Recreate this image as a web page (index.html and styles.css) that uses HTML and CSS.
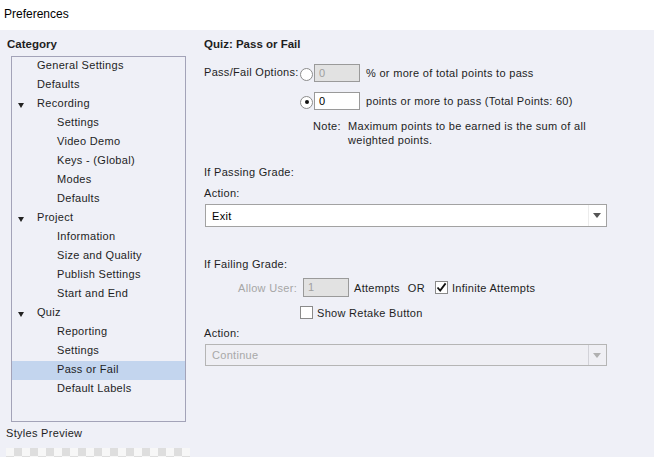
FILE: index.html
```html
<!DOCTYPE html>
<html lang="en">
<head>
    <meta charset="UTF-8">
    <title>Preferences</title>
    <link rel="stylesheet" href="styles.css">
</head>
<body>
    <div class="titlebar">Preferences</div>

    <div class="dialog">
        <div class="sidebar">
            <div class="heading">Category</div>
            <ul class="tree">
                <li class="lvl1">General Settings</li>
                <li class="lvl1">Defaults</li>
                <li class="lvl1 open">Recording</li>
                <li class="lvl2">Settings</li>
                <li class="lvl2">Video Demo</li>
                <li class="lvl2">Keys - (Global)</li>
                <li class="lvl2">Modes</li>
                <li class="lvl2">Defaults</li>
                <li class="lvl1 open">Project</li>
                <li class="lvl2">Information</li>
                <li class="lvl2">Size and Quality</li>
                <li class="lvl2">Publish Settings</li>
                <li class="lvl2">Start and End</li>
                <li class="lvl1 open">Quiz</li>
                <li class="lvl2">Reporting</li>
                <li class="lvl2">Settings</li>
                <li class="lvl2 selected">Pass or Fail</li>
                <li class="lvl2">Default Labels</li>
            </ul>
            <div class="preview-label">Styles Preview</div>
            <div class="checker"></div>
        </div>

        <div class="content">
            <div class="heading">Quiz: Pass or Fail</div>

            <div class="options">
                <div class="options-label">Pass/Fail Options:</div>
                <div class="options-list">
                    <div class="opt-row">
                        <span class="radio"></span>
                        <span class="field disabled">0</span>
                        <span>% or more of total points to pass</span>
                    </div>
                    <div class="opt-row">
                        <span class="radio checked"></span>
                        <span class="field">0</span>
                        <span>points or more to pass (Total Points: 60)</span>
                    </div>
                </div>
            </div>

            <div class="note">
                <span class="note-tag">Note:</span>
                <span>Maximum points to be earned is the sum of all<br>weighted points.</span>
            </div>

            <div class="section">If Passing Grade:</div>
            <div class="label">Action:</div>
            <div class="select">
                <span>Exit</span>
                <span class="select-btn"></span>
            </div>

            <div class="section failing">If Failing Grade:</div>
            <div class="attempts">
                <span class="attempts-label">Allow User:</span>
                <span class="field disabled short">1</span>
                <span class="attempts-text">Attempts</span>
                <span class="or">OR</span>
                <span class="check checked">
                    <svg width="11" height="11" viewBox="0 0 11 11"><path d="M1.5 5.5 L4.2 8.6 L9.6 1.4" fill="none" stroke="#111" stroke-width="1.8"/></svg>
                </span>
                <span>Infinite Attempts</span>
            </div>
            <div class="retake">
                <span class="check"></span>
                <span>Show Retake Button</span>
            </div>

            <div class="label">Action:</div>
            <div class="select disabled">
                <span>Continue</span>
                <span class="select-btn"></span>
            </div>
        </div>
    </div>
</body>
</html>
```

FILE: styles.css
```css
* {
    margin: 0;
    padding: 0;
    box-sizing: border-box;
}

body {
    width: 654px;
    height: 457px;
    overflow: hidden;
    background-color: #eff0f7;
    font-family: 'Liberation Sans', Arial, sans-serif;
    font-size: 11px;
    letter-spacing: 0.3px;
    color: #1e1e1e;
}

.titlebar {
    height: 30px;
    background-color: #fff;
    padding: 7px 0 0 4px;
    font-size: 12px;
    letter-spacing: 0;
    color: #000;
}

.dialog {
    display: flex;
}

.heading {
    font-weight: 700;
    font-size: 11.5px;
    letter-spacing: 0;
    height: 14px;
    line-height: 14px;
    margin-top: 7px;
}

/* left column: category tree */

.sidebar {
    width: 198px;
    padding-left: 7px;
}

.tree {
    list-style: none;
    margin: 5px 0 0 4px;
    width: 175px;
    height: 366px;
    border: 1px solid #a3a3b8;
}

.tree li {
    height: 19px;
    line-height: 17px;
    padding-bottom: 2px;
    position: relative;
}

.tree .lvl1 {
    padding-left: 25px;
}

.tree .lvl2 {
    padding-left: 45px;
}

.tree .open::before {
    content: "";
    position: absolute;
    left: 6px;
    top: 8px;
    border-left: 3.5px solid transparent;
    border-right: 3.5px solid transparent;
    border-top: 5px solid #222;
}

.tree .selected {
    background-color: #c3d5ee;
}

.preview-label {
    margin: 4px 0 0 -1px;
    height: 14px;
    line-height: 14px;
}

.checker {
    margin: 8px 0 0 -1px;
    width: 184px;
    height: 12px;
    background-color: #f7f7f7;
    background-image:
        linear-gradient(45deg, #dedede 25%, transparent 25%, transparent 75%, #dedede 75%),
        linear-gradient(45deg, #dedede 25%, transparent 25%, transparent 75%, #dedede 75%);
    background-size: 16px 16px;
    background-position: 0 0, 8px 8px;
}

/* right column: pass / fail settings */

.content {
    padding-left: 6px;
    width: 440px;
}

.options {
    display: flex;
    margin-top: 13px;
}

.options-label {
    width: 96px;
    padding-top: 2px;
    white-space: nowrap;
}

.options-list {
    display: flex;
    flex-direction: column;
    gap: 10px;
}

.opt-row {
    display: flex;
    align-items: center;
    height: 18px;
    white-space: nowrap;
}

.radio {
    width: 13px;
    height: 13px;
    border: 1px solid #8c8c8c;
    border-radius: 50%;
    background-color: #fff;
    margin-right: 1px;
    margin-top: 2px;
    position: relative;
    flex: none;
}

.radio.checked::after {
    content: "";
    position: absolute;
    left: 3.5px;
    top: 3.5px;
    width: 4px;
    height: 4px;
    border-radius: 50%;
    background-color: #111;
}

.field {
    width: 46px;
    height: 18px;
    border: 1px solid #9a9a9a;
    background-color: #fff;
    padding-left: 4px;
    line-height: 16px;
    margin-right: 6px;
    color: #000;
    flex: none;
}

.field.disabled {
    background-color: #e2e2e2;
    color: #a0a0a0;
}

.note {
    display: flex;
    margin: 9px 0 0 109px;
    line-height: 14px;
    white-space: nowrap;
}

.note-tag {
    width: 35px;
}

.section {
    margin-top: 18px;
    height: 14px;
    line-height: 14px;
}

.section.failing {
    margin-top: 30px;
}

.label {
    margin-top: 7px;
    height: 14px;
    line-height: 14px;
}

.select {
    margin: 4px 0 0 1px;
    width: 402px;
    height: 23px;
    border: 1px solid #a2a2a2;
    background-color: #fff;
    display: flex;
    align-items: center;
    justify-content: space-between;
    padding-left: 6px;
    color: #000;
}

.select.disabled {
    height: 22px;
    background-color: #efeff4;
    color: #a8a8a8;
    border-color: #b5b5b5;
}

.select-btn {
    width: 18px;
    height: 100%;
    border-left: 1px solid #ececec;
    position: relative;
}

.select.disabled .select-btn {
    border-left-color: #d2d2d8;
}

.select-btn::after {
    content: "";
    position: absolute;
    left: 4px;
    top: 8px;
    border-left: 4px solid transparent;
    border-right: 4px solid transparent;
    border-top: 5px solid #555;
}

.select.disabled .select-btn::after {
    border-top-color: #b0b0b0;
}

.attempts {
    display: flex;
    align-items: center;
    margin-top: 7px;
    height: 19px;
    white-space: nowrap;
}

.attempts-label {
    width: 99px;
    text-align: right;
    padding-right: 6px;
    color: #a6a6a6;
}

.field.short {
    height: 19px;
    margin-right: 5px;
    line-height: 17px;
}

.attempts-text {
    margin-right: 8px;
}

.or {
    margin-right: 10px;
}

.check {
    width: 13px;
    height: 13px;
    border: 1px solid #8a8a8a;
    background-color: #fff;
    margin-right: 4px;
    display: flex;
    align-items: center;
    justify-content: center;
    flex: none;
}

.retake {
    display: flex;
    align-items: center;
    margin: 9px 0 0 96px;
    height: 13px;
}
```
